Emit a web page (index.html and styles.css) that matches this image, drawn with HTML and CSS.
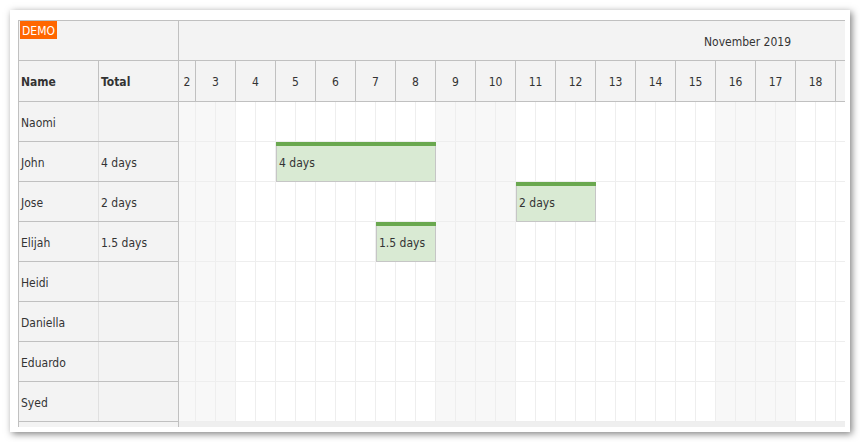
FILE: index.html
```html
<!DOCTYPE html>
<html lang="en">
<head>
<meta charset="utf-8">
<title>Scheduler</title>
<link rel="stylesheet" href="styles.css">
</head>
<body>
<div class="frame">
  <div class="scheduler">
    <div class="rowheaders">
      <div class="corner"><span class="demo">DEMO</span></div>
      <div class="colheads">
        <div class="rh-name">Name</div>
        <div class="rh-total">Total</div>
      </div>
      <div class="rh-row"><div class="rh-name">Naomi</div><div class="rh-total"></div></div>
      <div class="rh-row"><div class="rh-name">John</div><div class="rh-total">4 days</div></div>
      <div class="rh-row"><div class="rh-name">Jose</div><div class="rh-total">2 days</div></div>
      <div class="rh-row"><div class="rh-name">Elijah</div><div class="rh-total">1.5 days</div></div>
      <div class="rh-row"><div class="rh-name">Heidi</div><div class="rh-total"></div></div>
      <div class="rh-row"><div class="rh-name">Daniella</div><div class="rh-total"></div></div>
      <div class="rh-row"><div class="rh-name">Eduardo</div><div class="rh-total"></div></div>
      <div class="rh-row"><div class="rh-name">Syed</div><div class="rh-total"></div></div>
      <div class="rh-strip"></div>
    </div>
    <div class="timeline">
      <div class="month-row"><div class="month">November 2019</div></div>
      <div class="day-row">
        <div class="day part">2</div>
        <div class="day">3</div><div class="day">4</div><div class="day">5</div><div class="day">6</div>
        <div class="day">7</div><div class="day">8</div><div class="day">9</div><div class="day">10</div>
        <div class="day">11</div><div class="day">12</div><div class="day">13</div><div class="day">14</div>
        <div class="day">15</div><div class="day">16</div><div class="day">17</div><div class="day">18</div>
        <div class="day"></div>
      </div>
      <div class="grid-body">
        <div class="columns">
          <div class="cell part we"></div>
          <div class="cell we"></div><div class="cell we"></div>
          <div class="cell"></div><div class="cell"></div>
          <div class="cell"></div><div class="cell"></div>
          <div class="cell"></div><div class="cell"></div>
          <div class="cell"></div><div class="cell"></div>
          <div class="cell"></div><div class="cell"></div>
          <div class="cell we"></div><div class="cell we"></div>
          <div class="cell we"></div><div class="cell we"></div>
          <div class="cell"></div><div class="cell"></div>
          <div class="cell"></div><div class="cell"></div>
          <div class="cell"></div><div class="cell"></div>
          <div class="cell"></div><div class="cell"></div>
          <div class="cell"></div><div class="cell"></div>
          <div class="cell we"></div><div class="cell we"></div>
          <div class="cell we"></div><div class="cell we"></div>
          <div class="cell"></div><div class="cell"></div>
          <div class="cell"></div><div class="cell"></div>
        </div>
        <div class="rows">
          <div class="row"></div>
          <div class="row">
            <div class="event" style="left:97px;width:160px"><div class="bar"></div><div class="event-text">4 days</div></div>
          </div>
          <div class="row">
            <div class="event" style="left:337px;width:80px"><div class="bar"></div><div class="event-text">2 days</div></div>
          </div>
          <div class="row">
            <div class="event" style="left:197px;width:60px"><div class="bar"></div><div class="event-text">1.5 days</div></div>
          </div>
          <div class="row"></div>
          <div class="row"></div>
          <div class="row"></div>
          <div class="row"></div>
        </div>
      </div>
      <div class="grid-strip"></div>
    </div>
  </div>
</div>
</body>
</html>
```
FILE: styles.css
```css
* { box-sizing: border-box; }
html, body { margin: 0; padding: 0; background: #fff; }
body {
  font-family: "DejaVu Sans Condensed", "DejaVu Sans", sans-serif;
  font-size: 12px;
  color: #333;
}
.frame {
  margin: 10px;
  width: 840px;
  height: 422px;
  padding: 10px 5px 5px 8px;
  background: #fff;
  box-shadow: 2px 2px 7px rgba(0, 0, 0, 0.5);
}
.scheduler {
  display: flex;
  width: 827px;
  height: 407px;
  border-top: 1px solid #c0c0c0;
  border-left: 1px solid #c0c0c0;
  overflow: hidden;
}
/* row headers */
.rowheaders {
  flex: none;
  width: 160px;
  display: flex;
  flex-direction: column;
  background: #f3f3f3;
}
.corner {
  height: 40px;
  border-bottom: 1px solid #c0c0c0;
  border-right: 1px solid #c0c0c0;
  padding-left: 1px;
}
.demo {
  display: inline-block;
  width: 37px;
  height: 18px;
  line-height: 20px;
  overflow: hidden;
  background: #ff6600;
  color: #fff;
  text-align: center;
}
.colheads, .rh-row {
  display: flex;
  height: 40px;
  border-bottom: 1px solid #c0c0c0;
}
.colheads { height: 41px; font-weight: bold; }
.rh-name, .rh-total {
  display: flex;
  align-items: center;
  padding-left: 2px;
  padding-top: 2px;
  width: 80px;
}
.rh-name { border-right: 1px solid #e0e0e0; }
.colheads .rh-name { border-right-color: #c0c0c0; }
.rh-total { border-right: 1px solid #c0c0c0; }
.rh-strip {
  flex: 1;
  border-right: 1px solid #c0c0c0;
}
/* timeline */
.timeline {
  flex: 1;
  min-width: 0;
  display: flex;
  flex-direction: column;
  overflow: hidden;
}
.month-row {
  height: 40px;
  flex: none;
  background: #f3f3f3;
  border-bottom: 1px solid #c0c0c0;
}
.month {
  width: 1137px;
  height: 39px;
  padding-top: 2px;
  display: flex;
  align-items: center;
  justify-content: center;
}
.day-row {
  display: flex;
  flex: none;
  height: 41px;
  background: #f3f3f3;
  border-bottom: 1px solid #c0c0c0;
}
.day {
  flex: none;
  width: 40px;
  padding-top: 2px;
  display: flex;
  align-items: center;
  justify-content: center;
  border-right: 1px solid #c0c0c0;
}
.day.part { width: 17px; }
.grid-body {
  display: grid;
  flex: none;
  height: 320px;
}
.columns, .rows { grid-area: 1 / 1; }
.columns { display: flex; }
.cell {
  flex: none;
  width: 20px;
  background: #fff;
  border-right: 1px solid #eee;
}
.cell.part { width: 17px; }
.cell.we { background: #f8f8f8; }
.rows { display: flex; flex-direction: column; }
.row {
  position: relative;
  height: 40px;
  border-bottom: 1px solid #eee;
}
.event {
  position: absolute;
  top: 0;
  height: 40px;
  display: flex;
  flex-direction: column;
  background: #d9ead3;
  border: 1px solid #c6c6c6;
  border-top: 0;
}
.bar {
  height: 4px;
  margin: 0 -1px;
  background: #6aa84f;
}
.event-text {
  flex: 1;
  display: flex;
  align-items: center;
  padding-left: 2px;
  padding-bottom: 2px;
  white-space: nowrap;
}
.grid-strip {
  flex: 1;
  background: #efefef;
}
```
